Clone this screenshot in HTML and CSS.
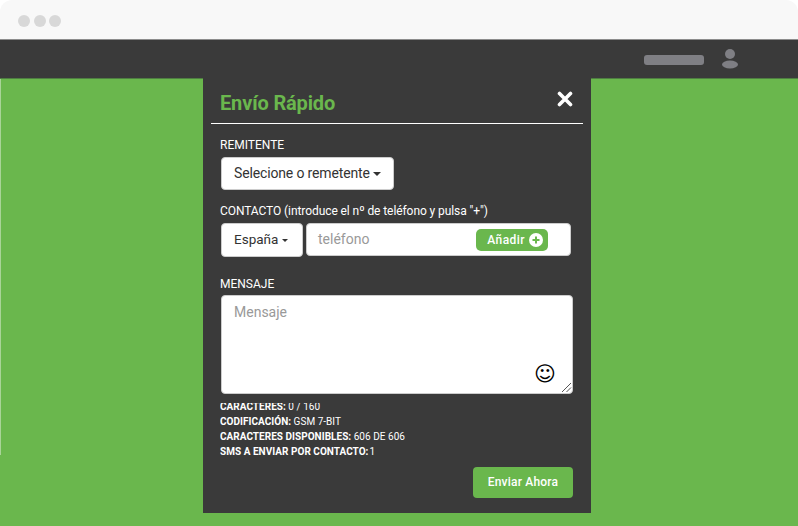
FILE: index.html
```html
<!DOCTYPE html>
<html lang="es">
<head>
<meta charset="utf-8">
<title>Envío Rápido</title>
<link rel="stylesheet" href="styles.css">
</head>
<body>
<div class="window">
  <div class="chrome">
    <span class="dot"></span><span class="dot"></span><span class="dot"></span>
  </div>
  <div class="nav">
    <span class="nav-pill"></span>
    <svg class="nav-user" width="18" height="22" viewBox="0 0 18 22"><circle cx="9" cy="6" r="5" fill="#7f7f84"/><ellipse cx="9" cy="16.5" rx="8" ry="4" fill="#7f7f84"/></svg>
  </div>
  <div class="main">
    <div class="modal">
      <div class="modal-head">
        <h1 class="title">Envío Rápido</h1>
        <svg class="close" width="16" height="16" viewBox="0 0 16 16"><path d="M2.5 2.5L13.5 13.5M13.5 2.5L2.5 13.5" stroke="#fff" stroke-width="3.6" stroke-linecap="round"/></svg>
      </div>
      <div class="modal-body">
        <div class="label label-first">REMITENTE</div>
        <div class="btn-select btn-sender">Selecione o remetente<span class="caret"></span></div>
        <div class="label label-contact">CONTACTO (introduce el nº de teléfono y pulsa "+")</div>
        <div class="contact-row">
          <div class="btn-select btn-country">España<span class="caret"></span></div>
          <div class="phone">
            <span class="phone-text">teléfono</span>
            <span class="add">Añadir<svg class="add-icon" width="14" height="14" viewBox="0 0 14 14"><circle cx="7" cy="7" r="7" fill="#fff"/><path d="M7 3.5V10.5M3.5 7H10.5" stroke="#6ab74d" stroke-width="2"/></svg></span>
          </div>
        </div>
        <div class="label label-msg">MENSAJE</div>
        <div class="textarea">
          <span class="placeholder">Mensaje</span>
          <span class="smile">☺</span>
          <svg class="grip" width="11" height="11" viewBox="0 0 11 11"><path d="M1 10L10 1M5.5 10L10 5.5" stroke="#555" stroke-width="1"/></svg>
        </div>
        <div class="stats">
          <div class="stats-inner">
            <div class="stat"><b>CARACTERES:</b> 0 / 160</div>
            <div class="stat"><b>CODIFICACIÓN:</b> GSM 7-BIT</div>
            <div class="stat"><b>CARACTERES DISPONIBLES:</b> 606 DE 606</div>
            <div class="stat"><b>SMS A ENVIAR POR CONTACTO:</b><span class="stat-tight">1</span></div>
          </div>
        </div>
        <div class="actions"><span class="send">Enviar Ahora</span></div>
      </div>
    </div>
  </div>
</div>
</body>
</html>
```
FILE: styles.css
```css
* { box-sizing: border-box; }
html, body { margin: 0; height: 100%; background: #fff; }
body { font-family: Roboto, sans-serif; color: #fff; overflow: hidden; }
.window { width: 798px; height: 526px; display: flex; flex-direction: column; border-radius: 12px 12px 0 0; overflow: hidden; }
.chrome { height: 40px; background: #f8f8f8; border-bottom: 1px solid #8d8d8d; display: flex; align-items: center; gap: 3.5px; padding: 2px 0 0 18px; }
.dot { width: 12px; height: 12px; border-radius: 50%; background: #d8d8d8; }
.nav { height: 38px; background: #3a3a3a; display: flex; align-items: center; padding: 0 59px 0 0; justify-content: flex-end; }
.nav-pill { width: 60px; height: 10px; border-radius: 3px; background: #7f7f84; margin-right: 17px; margin-top: 2px; }
.nav-user { display: block; }
.main { flex: 1; background: #6ab74d; border-top: 1px solid #4f7f42; display: flex; justify-content: flex-start; align-items: flex-start; position: relative; padding-left: 203px; }
.main::before { content: ""; position: absolute; left: 0; top: 0; width: 1px; height: 376px; background: #a9d498; }
.modal { width: 388px; height: 435px; margin-top: -1px; background: #3a3a3a; }
.modal-head { height: 46px; margin: 0 8px; border-bottom: 1px solid #fff; display: flex; justify-content: space-between; align-items: center; padding: 0 10px 0 9px; }
.title { margin: 4px 0 0; font-size: 20px; font-weight: 700; color: #6ab74d; line-height: 24px; letter-spacing: -0.15px; }
.close { display: block; margin-top: -3px; }
.modal-body { padding: 0 18px 0 18px; }
.label { font-size: 12px; line-height: 14px; color: #fff; margin-left: -1px; }
.label-first { margin-top: 14px; }
.btn-select { background: #fff; border: 1px solid #ccc; border-radius: 4px; color: #333; font-size: 14px; display: flex; align-items: center; padding-bottom: 2px; }
.btn-sender { width: 173px; height: 33px; margin-top: 5px; padding-left: 12px; letter-spacing: -0.15px; }
.caret { width: 0; height: 0; border-left: 4px solid transparent; border-right: 4px solid transparent; border-top: 4px solid #333; margin: 2px 0 0 3px; }
.label-contact { margin-top: 14px; letter-spacing: -0.08px; }
.contact-row { display: flex; gap: 3px; margin-top: 5px; }
.btn-country { width: 82px; height: 34px; padding-left: 12px; font-size: 13.5px; }
.btn-country .caret { margin-left: 4px; border-left-width: 3.5px; border-right-width: 3.5px; border-top-width: 3.5px; }
.phone { width: 265px; height: 33px; background: #fff; border: 1px solid #ccc; border-radius: 4px; display: flex; align-items: center; justify-content: space-between; padding: 0 22px 2px 11px; }
.phone-text { font-size: 14px; color: #999; }
.add { width: 72px; height: 22px; margin-top: 2px; background: #6ab74d; border-radius: 5px; display: flex; align-items: center; justify-content: flex-end; gap: 4px; padding-right: 5px; font-size: 12px; font-weight: 500; letter-spacing: 0.45px; color: #fff; }
.add-icon { display: block; }
.label-msg { margin-top: 20px; }
.textarea { position: relative; width: 352px; height: 99px; margin-top: 4px; background: #fff; border: 1px solid #ccc; border-radius: 4px; padding: 8px 12px; }
.placeholder { font-size: 14px; line-height: 17px; color: #999; display: block; }
.smile { position: absolute; right: 16px; bottom: 7px; font-family: "DejaVu Sans", sans-serif; font-size: 21px; line-height: 24px; color: #000; }
.grip { position: absolute; right: 0; bottom: 0; }
.stats { height: 56px; margin-top: 9px; margin-left: -1px; overflow: hidden; }
.stats-inner { margin-top: -4px; }
.stat { font-size: 10px; line-height: 15px; font-weight: 400; letter-spacing: 0.03px; }
.stat b { font-weight: 700; }
.stat-tight { margin-left: 1px; }
.actions { display: flex; justify-content: flex-end; margin-top: 8px; }
.send { width: 100px; height: 31px; background: #6ab74d; border-radius: 4px; display: flex; align-items: center; justify-content: center; font-size: 12px; font-weight: 500; letter-spacing: 0.2px; color: #fff; padding-bottom: 1px; }
```
